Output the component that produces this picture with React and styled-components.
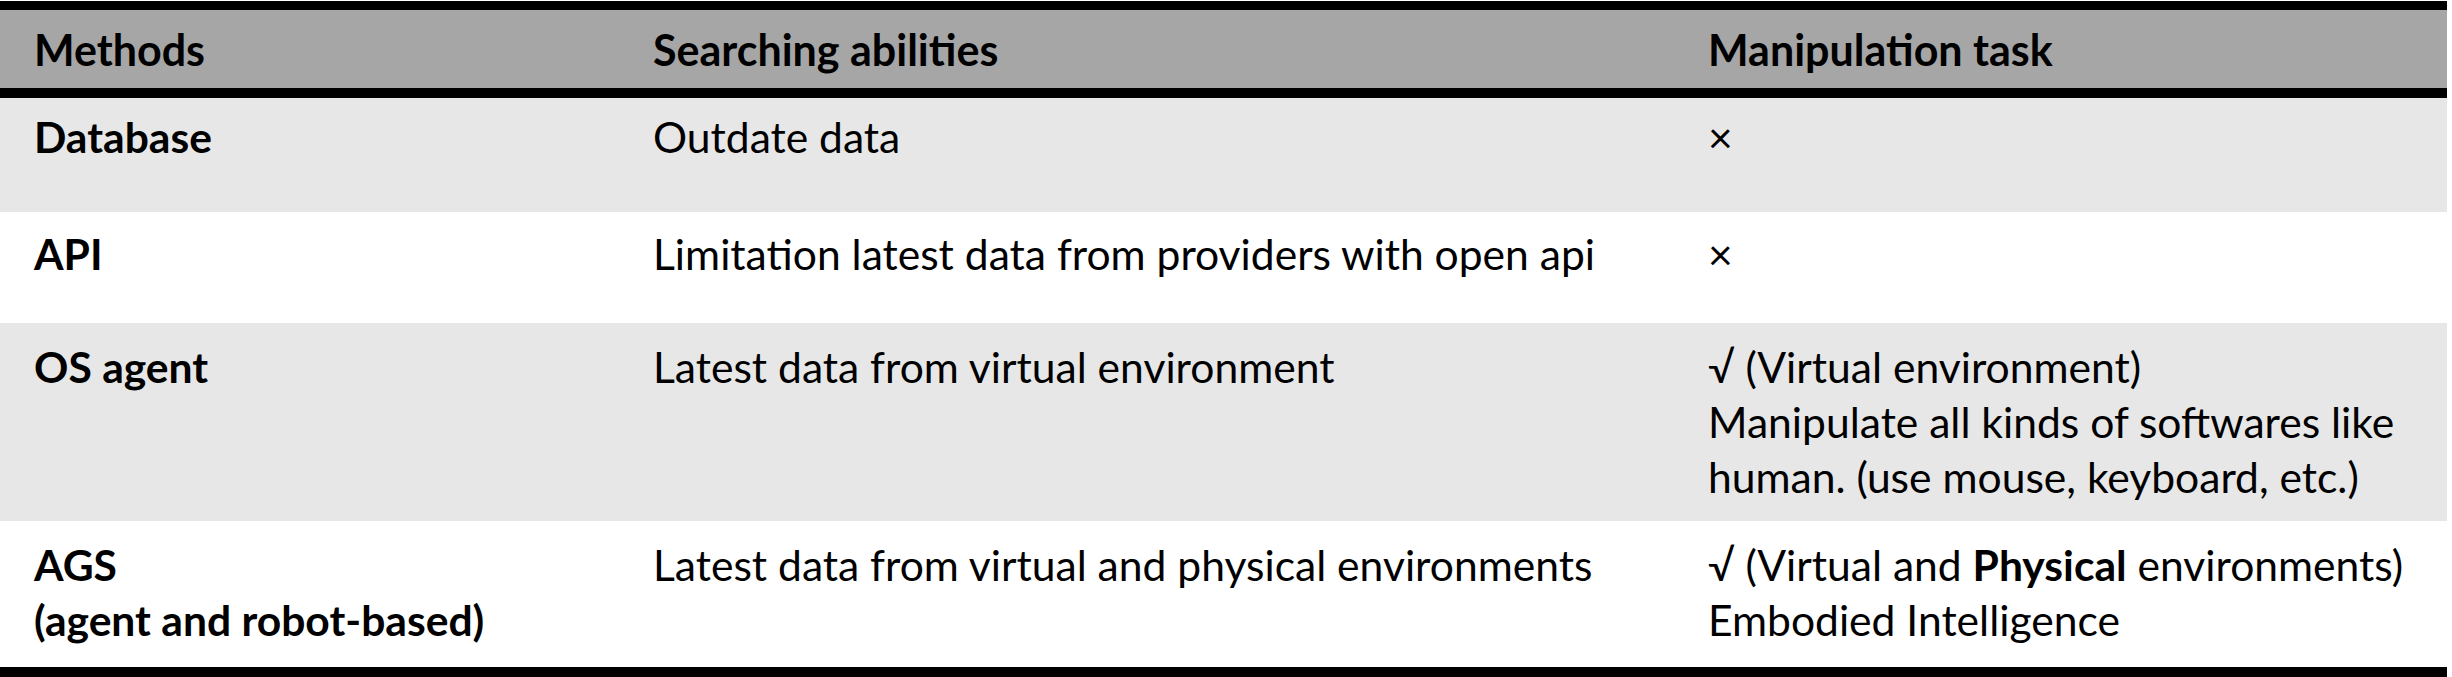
import React from 'react'
import styled, { createGlobalStyle } from 'styled-components'

const GlobalStyle = createGlobalStyle`
    body {
        margin: 0;
        background: #fff;
        font-family: Lato, "Liberation Sans", sans-serif;
        color: #000;
    }
`

const rows = [
    {
        method: ['Database'],
        search: 'Outdate data',
        task: [['×']],
        shaded: true,
        height: 114,
        pad: 11,
    },
    {
        method: ['API'],
        search: 'Limitation latest data from providers with open api',
        task: [['×']],
        height: 111,
        pad: 14,
    },
    {
        method: ['OS agent'],
        search: 'Latest data from virtual environment',
        task: [
            ['√ (Virtual environment)'],
            ['Manipulate all kinds of softwares like'],
            ['human. (use mouse, keyboard, etc.)'],
        ],
        shaded: true,
        height: 198,
        pad: 16,
    },
    {
        method: ['AGS', '(agent and robot-based)'],
        search: 'Latest data from virtual and physical environments',
        task: [
            ['√ (Virtual and ', <b key="b">Physical</b>, ' environments)'],
            ['Embodied Intelligence'],
        ],
        height: 146,
        pad: 16,
    },
]

const App = () => {
    return (
        <>
            <GlobalStyle />
            <Table>
                <HeaderRow>
                    <HeadCell>Methods</HeadCell>
                    <HeadCell>Searching abilities</HeadCell>
                    <HeadCell>Manipulation task</HeadCell>
                </HeaderRow>
                {rows.map((row) => (
                    <Row key={row.method[0]} $shaded={row.shaded} $height={row.height} $pad={row.pad}>
                        <MethodCell>
                            {row.method.map((line) => (
                                <Line key={line}>{line}</Line>
                            ))}
                        </MethodCell>
                        <Cell>
                            <Line>{row.search}</Line>
                        </Cell>
                        <Cell>
                            {row.task.map((parts, i) => (
                                <Line key={i}>{parts}</Line>
                            ))}
                        </Cell>
                    </Row>
                ))}
            </Table>
        </>
    )
}

const Table = styled.div`
    width: 2447px;
    margin-top: 1px;
    border-top: 9px solid #000;
    border-bottom: 10px solid #000;
`

const columns = `619px 1055px 1fr`

const HeaderRow = styled.div`
    display: grid;
    grid-template-columns: ${columns};
    align-items: center;
    height: 78px;
    background: #a6a6a6;
    border-bottom: 10px solid #000;
`

const HeadCell = styled.div`
    padding-left: 34px;
    font-size: 43px;
    font-weight: 700;
    line-height: 55px;
    white-space: nowrap;
`

const Row = styled.div`
    display: grid;
    grid-template-columns: ${columns};
    align-items: start;
    box-sizing: border-box;
    height: ${(p) => p.$height}px;
    padding-top: ${(p) => p.$pad}px;
    background: ${(p) => (p.$shaded ? '#e7e7e7' : '#fff')};
`

const Cell = styled.div`
    padding-left: 34px;
    font-size: 42.6px;
    line-height: 55px;
    white-space: nowrap;

    b {
        font-weight: 700;
    }
`

const MethodCell = styled(Cell)`
    font-weight: 700;
`

const Line = styled.div``

export default App
